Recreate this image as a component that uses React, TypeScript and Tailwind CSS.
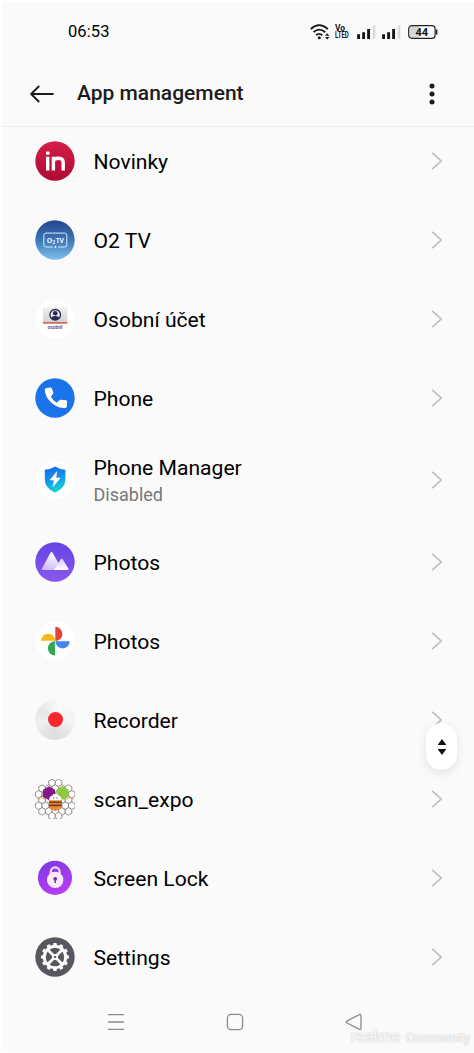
import type { ReactNode } from 'react';

interface AppEntry {
  id: string;
  name: string;
  status?: string;
  icon: ReactNode;
}

function NovinkyIcon() {
  return (
    <svg viewBox="0 0 40 40" className="size-10">
      <defs>
        <linearGradient id="novinky" x1="0" y1="0" x2="0" y2="1">
          <stop offset="0" stopColor="#d41f49" />
          <stop offset="1" stopColor="#ae0a33" />
        </linearGradient>
      </defs>
      <circle cx="20" cy="20" r="19.7" fill="url(#novinky)" />
      <g fill="none" stroke="#fff" strokeWidth="3.4">
        <path d="M12.7 15.8V29.6M18.4 29.6V15.8M18.4 20.6Q18.6 17.3 23.6 17.3Q28.2 17.3 28.2 21.6V29.6" />
      </g>
      <rect x="11" y="10.4" width="3.5" height="3.4" rx="0.8" fill="#fff" />
    </svg>
  );
}

function O2Icon() {
  return (
    <svg viewBox="0 0 40 40" className="size-10">
      <defs>
        <linearGradient id="o2tv" x1="0" y1="0" x2="0" y2="1">
          <stop offset="0" stopColor="#24468c" />
          <stop offset="0.5" stopColor="#3f76b6" />
          <stop offset="1" stopColor="#7cc0ea" />
        </linearGradient>
      </defs>
      <circle cx="20" cy="20" r="19.7" fill="url(#o2tv)" />
      <path
        d="M17.8 27H11Q8.8 27 8.8 24.8V15.3Q8.8 13.1 11 13.1H29.6Q31.8 13.1 31.8 15.3V24.8Q31.8 27 29.6 27H23"
        fill="none"
        stroke="#d5ebfa"
        strokeWidth="1"
      />
      <circle cx="20.4" cy="26.9" r="1" fill="#e8f5ff" />
      <g fill="#eef8ff" fontFamily="Roboto, sans-serif" fontWeight="700">
        <text x="11.7" y="22.7" fontSize="8">O</text>
        <text x="17.6" y="24.1" fontSize="4.6">2</text>
        <text x="20.7" y="22.6" fontSize="6.6" textLength="8.2">TV</text>
      </g>
    </svg>
  );
}

function OsobniUcetIcon() {
  return (
    <svg viewBox="0 0 40 40" className="size-10">
      <defs>
        <linearGradient id="osobni" x1="0" y1="0" x2="0" y2="1">
          <stop offset="0" stopColor="#f1f1f2" />
          <stop offset="1" stopColor="#cfd1d5" />
        </linearGradient>
      </defs>
      <circle cx="20" cy="20" r="19.5" fill="#fff" />
      <rect x="8" y="8.2" width="24.3" height="15" fill="url(#osobni)" />
      <rect x="8" y="23" width="24.3" height="1.8" fill="#d2705f" />
      <circle cx="20.2" cy="15.8" r="5.3" fill="#e9eaf0" stroke="#27294d" strokeWidth="1.3" />
      <circle cx="20.2" cy="14.3" r="2.3" fill="#27294d" />
      <path d="M16.2 19.2Q16.8 16.9 20.2 16.9T24.2 19.2Q22.5 21 20.2 21T16.2 19.2Z" fill="#27294d" />
      <text
        x="12.5"
        y="30.3"
        fontSize="4.8"
        fontWeight="700"
        fontFamily="Roboto, sans-serif"
        fill="#5b5c88"
        textLength="14.8"
        lengthAdjust="spacingAndGlyphs"
      >
        osobní
      </text>
      <path d="M25 27.3L27.6 26.3" stroke="#db806f" strokeWidth="0.8" />
    </svg>
  );
}

function PhoneIcon() {
  return (
    <svg viewBox="0 0 40 40" className="size-10">
      <circle cx="20" cy="20" r="19.7" fill="#1a73e8" />
      <path
        d="M11.6 9.9L15.1 9.4Q16.3 9.3 16.8 10.4L18.3 14.2Q18.6 15.1 18 15.8L16 18.8Q18 22.7 21.6 24.7L24.2 22.3Q24.9 21.6 25.8 21.7L31 22.2Q32.2 22.4 32.2 23.6L31.8 28.2Q31.6 30.1 29.8 30.1Q22.2 30.1 16.2 24.6Q10.2 18.8 9.7 12Q9.6 10.2 11.6 9.9Z"
        fill="#fff"
      />
    </svg>
  );
}

function PhoneManagerIcon() {
  return (
    <svg viewBox="0 0 40 40" className="size-10">
      <defs>
        <linearGradient id="shield" x1="0.3" y1="0" x2="0.6" y2="1">
          <stop offset="0" stopColor="#1768ec" />
          <stop offset="0.5" stopColor="#1796ee" />
          <stop offset="1" stopColor="#18dfc8" />
        </linearGradient>
      </defs>
      <circle cx="20" cy="20" r="19.5" fill="#fff" />
      <path
        d="M20 6.5Q24.4 9.3 29.3 9.4Q30.4 9.4 30.4 10.6V19.5Q30.4 28 20 32.7Q9.8 28 9.8 19.5V10.6Q9.8 9.4 10.9 9.4Q15.7 9.3 20 6.5Z"
        fill="url(#shield)"
      />
      <path d="M21.8 11.7L15.1 20H19.3L18.2 26.4L25.2 18H20.9Z" fill="#fff" stroke="#fff" strokeWidth="0.6" strokeLinejoin="round" />
    </svg>
  );
}

function GalleryIcon() {
  return (
    <svg viewBox="0 0 40 40" className="size-10">
      <defs>
        <linearGradient id="gallery" x1="0" y1="0" x2="0" y2="1">
          <stop offset="0" stopColor="#6543e4" />
          <stop offset="1" stopColor="#8758ed" />
        </linearGradient>
        <linearGradient id="peak" x1="0.6" y1="0" x2="0.3" y2="1">
          <stop offset="0" stopColor="#fff" />
          <stop offset="1" stopColor="#cdbcf8" />
        </linearGradient>
        <linearGradient id="peakFront" x1="0.4" y1="0" x2="0.5" y2="1">
          <stop offset="0" stopColor="#d8caff" />
          <stop offset="1" stopColor="#fff" />
        </linearGradient>
      </defs>
      <circle cx="20" cy="20" r="19.7" fill="url(#gallery)" />
      <path d="M7 26.6L15.3 11Q16.5 9 17.8 11L27.2 28H7.8Q6.4 28 7 26.6Z" fill="url(#peak)" />
      <path d="M19 28L25.6 17.4Q26.7 15.8 27.8 17.4L33.4 26.6Q34 28 32.6 28Z" fill="url(#peakFront)" />
    </svg>
  );
}

function GooglePhotosIcon() {
  return (
    <svg viewBox="0 0 40 40" className="size-10">
      <circle cx="20" cy="20" r="19.5" fill="#fff" />
      <path d="M20.3 5.8A7.1 7.1 0 0 1 20.3 20Z" fill="#e5433a" />
      <path d="M6 19.8A7.1 7.1 0 0 1 20.2 19.8Z" fill="#f6b91a" />
      <path d="M34.7 20.3H20.5A7.1 7.1 0 0 0 34.7 20.3Z" fill="#4384f0" />
      <path d="M20.1 34.5V20.2A7.15 7.15 0 0 0 20.1 34.5Z" fill="#32a653" />
    </svg>
  );
}

function RecorderIcon() {
  return (
    <div className="flex size-10 items-center justify-center rounded-full bg-[conic-gradient(from_20deg,#fafafa,#f5f5f5,#f3f3f3,#e6e6e6,#dedede,#e4e4e4,#f1f1f1,#e6e6e6,#f0f0f0,#fafafa)]">
      <div className="size-[15px] rounded-full bg-[#f6272d]" />
    </div>
  );
}

// Pointy-top hexagon outline around (cx, cy)
function hexagon(cx: number, cy: number, r: number) {
  return Array.from({ length: 6 }, (_, i) => {
    const angle = (Math.PI / 3) * i + Math.PI / 6;
    return `${(cx + r * Math.cos(angle)).toFixed(2)},${(cy + r * Math.sin(angle)).toFixed(2)}`;
  }).join(' ');
}

const honeycomb = [
  { y: 3.9, xs: [17, 23.6] },
  { y: 9.6, xs: [7.1, 13.7, 20.3, 26.9, 33.5] },
  { y: 15.3, xs: [3.8, 10.4, 17, 23.6, 30.2, 36.8] },
  { y: 21, xs: [7.1, 13.7, 26.9, 33.5] },
  { y: 26.7, xs: [3.8, 10.4, 30.2, 36.8] },
  { y: 32.4, xs: [7.1, 13.7, 20.3, 26.9, 33.5] },
  { y: 37, xs: [17, 23.6] },
];

function ScanExpoIcon() {
  return (
    <svg viewBox="0 0 40 40" className="size-10">
      <g fill="#fff" stroke="#77716f" strokeWidth="0.75">
        {honeycomb.flatMap((row) =>
          row.xs.map((x) => <polygon key={`${x}-${row.y}`} points={hexagon(x, row.y, 3.8)} />),
        )}
      </g>
      <polygon points={hexagon(14, 14.2, 7)} fill="#87178a" />
      <polygon points={hexagon(27.4, 14, 7)} fill="#8dca3f" />
      <path d="M2 20.2L6 18.6L10 20.4M30.8 20.4L35 18.6L38.6 20.2" fill="none" stroke="#ee9b58" strokeWidth="1" />
      <path d="M13.8 21H27V28.5L20.4 32.2L13.8 28.5Z" fill="#f3892f" />
      <path d="M14 23.2H26.8M14 26.4H26.8" stroke="#65402c" strokeWidth="1.6" />
      <path d="M14.2 21.3Q14 17.5 17 16.8Q17.5 14.8 20.4 14.8T23.7 16.8Q26.8 17.5 26.6 21.3Z" fill="#fff" />
      <path d="M18.6 18.2V19.6M22 18.2V19.6" stroke="#554a55" strokeWidth="0.9" />
    </svg>
  );
}

function ScreenLockIcon() {
  return (
    <svg viewBox="0 0 40 40" className="size-10">
      <defs>
        <linearGradient id="lock" x1="0.2" y1="0" x2="0.6" y2="1">
          <stop offset="0" stopColor="#8139e6" />
          <stop offset="1" stopColor="#b93cf3" />
        </linearGradient>
      </defs>
      <circle cx="20" cy="19.8" r="17.1" fill="url(#lock)" />
      <path d="M15.8 17V13.8A4.4 4.4 0 0 1 24.6 13.8V17" fill="none" stroke="#f2d9fb" strokeWidth="2.3" />
      <circle cx="20.2" cy="21.9" r="8.2" fill="#fbeafd" />
      <circle cx="20.2" cy="20.8" r="1.9" fill="#7b2c9b" />
      <path d="M19.5 21.5H20.9V25H19.5Z" fill="#7b2c9b" />
    </svg>
  );
}

function SettingsIcon() {
  return (
    <svg viewBox="0 0 40 40" className="size-10">
      <circle cx="20" cy="20" r="19.7" fill="#57585f" />
      <g fill="#fff">
        {[0, 30, 60, 90, 120, 150, 180, 210, 240, 270, 300, 330].map((deg) => (
          <rect key={deg} x="18.2" y="6" width="3.6" height="4" rx="1" transform={`rotate(${deg} 20 20)`} />
        ))}
      </g>
      <circle cx="20" cy="20" r="10.7" fill="none" stroke="#fff" strokeWidth="2.9" />
      <path d="M12.7 12.7L27.3 27.3M27.3 12.7L12.7 27.3" stroke="#fff" strokeWidth="2.7" />
      <circle cx="20" cy="20" r="3" fill="#fff" />
      <circle cx="20" cy="20" r="1.3" fill="#6b6c72" />
    </svg>
  );
}

const apps: AppEntry[] = [
  { id: 'novinky', name: 'Novinky', icon: <NovinkyIcon /> },
  { id: 'o2tv', name: 'O2 TV', icon: <O2Icon /> },
  { id: 'osobni-ucet', name: 'Osobní účet', icon: <OsobniUcetIcon /> },
  { id: 'phone', name: 'Phone', icon: <PhoneIcon /> },
  { id: 'phone-manager', name: 'Phone Manager', status: 'Disabled', icon: <PhoneManagerIcon /> },
  { id: 'gallery', name: 'Photos', icon: <GalleryIcon /> },
  { id: 'google-photos', name: 'Photos', icon: <GooglePhotosIcon /> },
  { id: 'recorder', name: 'Recorder', icon: <RecorderIcon /> },
  { id: 'scan-expo', name: 'scan_expo', icon: <ScanExpoIcon /> },
  { id: 'screen-lock', name: 'Screen Lock', icon: <ScreenLockIcon /> },
  { id: 'settings', name: 'Settings', icon: <SettingsIcon /> },
];

function SignalIcon() {
  return (
    <svg viewBox="0 0 19 14" className="h-3.5 w-[19px]">
      <path d="M1.6 14V9.2M6.6 14V7.2M11.6 14V4" stroke="#171717" strokeWidth="2.9" />
      <path d="M17 14V0.5" stroke="#dadada" strokeWidth="2.6" />
    </svg>
  );
}

function StatusBar() {
  return (
    <div className="flex h-[61px] items-center pr-9 pl-[66px]">
      <span className="text-[16.5px] tracking-[0.1px] text-black">06:53</span>
      <div className="ml-auto flex items-center">
        <svg viewBox="0 0 20 16" className="h-4 w-5">
          <g fill="none" stroke="#171717" strokeWidth="1.8">
            <path d="M0.8 5Q9.2 -2.8 17.8 5" />
            <path d="M3.5 8.2Q9.2 3 15.2 8.2" />
            <path d="M6.2 11.2Q9.2 8.6 12.3 11.2" />
          </g>
          <circle cx="9.3" cy="13.8" r="1.5" fill="#171717" />
          <path d="M15 11.8L17.2 9.3L19.4 11.8ZM15 13L17.2 15.5L19.4 13Z" fill="#171717" />
        </svg>
        <div className="ml-[5px] flex w-[17px] origin-left flex-col text-[8.5px] leading-[7px] font-bold text-[#171717]">
          <span className="w-max">Vo</span>
          <span className="w-max origin-left scale-x-[0.72]">LTED</span>
        </div>
        <div className="ml-[5px] flex gap-1.5">
          <SignalIcon />
          <SignalIcon />
        </div>
        <svg viewBox="0 0 30 14" className="ml-[7px] h-3.5 w-[30px]">
          <rect x="2" y="1" width="9" height="12" fill="#d6d6d6" />
          <rect x="0.7" y="0.7" width="26.4" height="12.6" rx="3" fill="none" stroke="#222" strokeWidth="1.2" />
          <path d="M28.6 4.5V9.5" stroke="#222" strokeWidth="1.6" />
          <text
            x="7.4"
            y="10.8"
            fontSize="10.5"
            fontWeight="700"
            fontFamily="Roboto, sans-serif"
            fill="#111"
            textLength="12.6"
            lengthAdjust="spacingAndGlyphs"
          >
            44
          </text>
        </svg>
      </div>
    </div>
  );
}

function AppBar() {
  return (
    <header className="flex h-[65px] items-center border-b border-[#eeeeee] pr-[39px] pl-7">
      <svg viewBox="0 0 24 18" className="h-[18px] w-6" fill="none" stroke="#1c1c1c" strokeWidth="1.9">
        <path d="M9.2 1L1.2 9L9.2 17M1.4 9H23.6" strokeLinejoin="round" />
      </svg>
      <h1 className="ml-[23px] text-[21px] font-medium text-[#1c1c1c]">App management</h1>
      <svg viewBox="0 0 6 22" className="ml-auto h-[22px] w-1.5" fill="#1c1c1c">
        <circle cx="3" cy="2.9" r="2.5" />
        <circle cx="3" cy="11" r="2.5" />
        <circle cx="3" cy="19.1" r="2.5" />
      </svg>
    </header>
  );
}

function AppRow({ app }: { app: AppEntry }) {
  return (
    <li className={`flex shrink-0 items-center pr-[31px] pl-[33px] ${app.status ? 'h-[85px]' : 'h-[79px]'}`}>
      {app.icon}
      <div className="ml-[18.5px] pt-0.5">
        <p className="text-[21.1px] leading-7 text-black">{app.name}</p>
        {app.status ? <p className="text-lg leading-[26px] text-[#777777]">{app.status}</p> : null}
      </div>
      <svg viewBox="0 0 12 18" className="ml-auto h-[18px] w-3" fill="none" stroke="#bdbdbd" strokeWidth="1.6">
        <path d="M1.2 0.8L10.2 9L1.2 17.2" />
      </svg>
    </li>
  );
}

function NavigationBar() {
  return (
    <nav className="relative flex h-[58px] shrink-0 items-center justify-between pr-[111px] pl-[105px]">
      <svg viewBox="0 0 18 18" className="size-[18px]" fill="none" stroke="#8c8c8c" strokeWidth="1.3">
        <path d="M1 1.6H17M1 9H17M1 16.4H17" />
      </svg>
      <svg viewBox="0 0 18 18" className="size-[18px]" fill="none" stroke="#8c8c8c" strokeWidth="1.3">
        <rect x="1.4" y="1.4" width="15.2" height="15.2" rx="3.6" />
      </svg>
      <svg viewBox="0 0 18 18" className="size-[18px]" fill="none" stroke="#8c8c8c" strokeWidth="1.3">
        <path d="M1.7 8.2L14.4 1.6Q16 1 16 2.5V15.5Q16 17 14.4 16.3L1.7 9.8Q0.7 9 1.7 8.2Z" />
      </svg>
      <div className="absolute right-1 bottom-[3px] flex items-center gap-1.5 whitespace-nowrap text-[#fafafa] [text-shadow:0_0_1.5px_#aaa]">
        <span className="text-[16px] leading-5">realme</span>
        <span className="pt-0.5 text-[12.5px] leading-5">Community</span>
      </div>
    </nav>
  );
}

export default function App() {
  return (
    <div className="relative flex h-[1053px] w-[474px] flex-col overflow-hidden border-2 border-r-0 border-[#fefefe] bg-[#fafafa] font-[Roboto,sans-serif]">
      <StatusBar />
      <AppBar />
      <ul className="-mt-[5.5px] flex h-[872px] shrink-0 flex-col">
        {apps.map((app) => (
          <AppRow key={app.id} app={app} />
        ))}
      </ul>
      <NavigationBar />
      <button
        type="button"
        className="absolute top-[721px] right-[17px] flex h-[47px] w-[31px] items-center justify-center rounded-full bg-white shadow-[0_3px_10px_rgba(0,0,0,0.1)]"
      >
        <svg viewBox="0 0 10 18" className="h-[18px] w-2.5" fill="#111">
          <path d="M0.6 7L5 1L9.4 7ZM0.6 11L5 17L9.4 11Z" />
        </svg>
      </button>
    </div>
  );
}
